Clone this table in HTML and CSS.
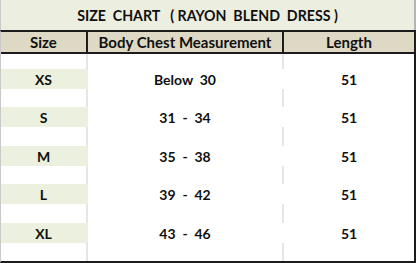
FILE: index.html
```html
<!DOCTYPE html>
<html>
<head>
<meta charset="utf-8">
<link rel="stylesheet" href="styles.css">
</head>
<body>
<div class="sheet">
  <div class="title">SIZE  CHART   ( RAYON  BLEND  DRESS )</div>
  <div class="table">
    <div class="hcell">Size</div>
    <div class="hdiv"></div>
    <div class="hcell">Body Chest Measurement</div>
    <div class="hdiv"></div>
    <div class="hcell">Length</div>

    <div class="gap first"><span></span><i></i><span></span><i></i><span></span></div>
    <div class="row"><span class="size">XS</span><b></b><span>Below  30</span><b></b><span>51</span></div>
    <div class="gap h18"><span></span><i></i><span></span><i></i><span></span></div>
    <div class="row"><span class="size">S</span><b></b><span>31  -  34</span><b></b><span>51</span></div>
    <div class="gap h19"><span></span><i></i><span></span><i></i><span></span></div>
    <div class="row"><span class="size">M</span><b></b><span>35  -  38</span><b></b><span>51</span></div>
    <div class="gap h18"><span></span><i></i><span></span><i></i><span></span></div>
    <div class="row"><span class="size">L</span><b></b><span>39  -  42</span><b></b><span>51</span></div>
    <div class="gap h19"><span></span><i></i><span></span><i></i><span></span></div>
    <div class="row"><span class="size">XL</span><b></b><span>43  -  46</span><b></b><span>51</span></div>
    <div class="gap h18"><span></span><i></i><span></span><i></i><span></span></div>
  </div>
</div>
</body>
</html>
```
FILE: styles.css
```css
html, body {
  margin: 0;
  padding: 0;
  background: #ffffff;
}
.sheet {
  width: 416px;
  height: 263px;
  font-family: Lato, "Liberation Sans", sans-serif;
  font-weight: 700;
  color: #101010;
  box-sizing: border-box;
}
.title {
  height: 30px;
  background: #eceee0;
  border-left: 1px solid #c9c9c9;
  border-right: 2px solid #b5b5b5;
  box-sizing: border-box;
  display: flex;
  align-items: center;
  justify-content: center;
  white-space: pre;
  font-size: 14.2px;
  padding-top: 1px;
}
.table {
  display: grid;
  grid-template-columns: 85px 2px 194px 2px 130px;
  border-top: 2px solid #1c1c1c;
  border-right: 2px solid #1c1c1c;
  border-bottom: 2px solid #1c1c1c;
  border-left: 1px solid #c9c9c9;
  height: 233px;
  box-sizing: border-box;
}
.hcell {
  height: 20px;
  background: #ddd9c4;
  border-bottom: 2px solid #1c1c1c;
  display: flex;
  align-items: center;
  justify-content: center;
  font-size: 15px;
}
.hdiv {
  background: #1c1c1c;
  height: 22px;
}
.gap, .row {
  grid-column: 1 / -1;
  display: grid;
  grid-template-columns: 85px 2px 194px 2px 130px;
}
.gap { height: 18px; }
.gap.first { height: 15px; }
.gap.h19 { height: 19px; }
.gap i { background: #e6e6e6; }
.row {
  height: 20px;
  font-size: 14px;
}
.row span {
  display: flex;
  align-items: center;
  justify-content: center;
  white-space: pre;
  padding-top: 1px;
}
.row .size {
  background: #ebf1de;
}
.row b {
  display: block;
}
.row b:first-of-type {
  background: #ebf1de;
}
```
